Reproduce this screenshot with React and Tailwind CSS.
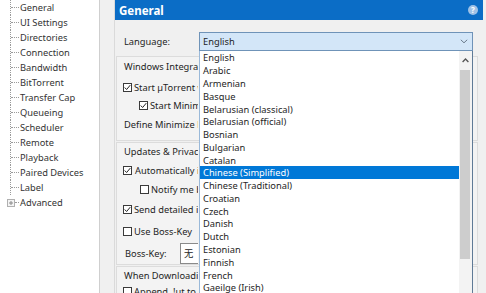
import React from "react";

const tree = [
  "General",
  "UI Settings",
  "Directories",
  "Connection",
  "Bandwidth",
  "BitTorrent",
  "Transfer Cap",
  "Queueing",
  "Scheduler",
  "Remote",
  "Playback",
  "Paired Devices",
  "Label",
];

const langs = [
  "English",
  "Arabic",
  "Armenian",
  "Basque",
  "Belarusian (classical)",
  "Belarusian (official)",
  "Bosnian",
  "Bulgarian",
  "Catalan",
  "Chinese (Simplified)",
  "Chinese (Traditional)",
  "Croatian",
  "Czech",
  "Danish",
  "Dutch",
  "Estonian",
  "Finnish",
  "French",
  "Gaeilge (Irish)",
];

function Check({ checked }) {
  return (
    <span className="w-[9px] h-[9px] border border-[#3a3a3a] bg-white flex items-center justify-center shrink-0">
      {checked && (
        <svg width="7" height="7" viewBox="0 0 7 7">
          <path d="M0.7 3.5 L2.6 5.5 L6.3 1.1" fill="none" stroke="#222" strokeWidth="1" />
        </svg>
      )}
    </span>
  );
}

export default function App() {
  return (
    <div className="w-[486px] h-[293px] overflow-hidden bg-[#f0f0f0] flex font-['Noto_Sans','Noto_Sans_CJK_SC',sans-serif] text-[9.3px] leading-[13px] text-[#1e1e1e]">
      {/* Left tree */}
      <div className="w-[100px] h-full bg-white border-r border-[#cfcfcf] flex flex-col shrink-0">
        {tree.map((t) => (
          <div key={t} className="h-[15px] flex items-stretch">
            <div className="w-[10px] shrink-0" />
            <div className="w-[9px] shrink-0 border-l border-dotted border-[#9a9a9a] flex items-center">
              <div className="w-full border-t border-dotted border-[#9a9a9a]" />
            </div>
            <div className="flex items-center pl-[1px] text-[#333]">{t}</div>
          </div>
        ))}
        <div className="h-[15px] flex items-center">
          <div className="w-[7px] shrink-0" />
          <div className="w-[8px] h-[8px] border border-[#b0b0b0] bg-[#f4f4f4] flex items-center justify-center shrink-0">
            <svg width="6" height="6" viewBox="0 0 6 6">
              <path d="M1 3 H5 M3 1 V5" stroke="#8a8a8a" strokeWidth="1" />
            </svg>
          </div>
          <div className="w-[4px] border-t border-dotted border-[#9a9a9a]" />
          <div className="pl-[1px] text-[#333]">Advanced</div>
        </div>
      </div>

      {/* Main panel */}
      <div className="ml-[14px] w-[369px] h-full flex flex-col shrink-0 border-l border-[#dadada]">
        <div className="h-[20px] bg-[#0b6dc6] flex items-center justify-between pl-[4px] pr-[5px] shrink-0">
          <span className="text-white font-bold text-[11.5px]">General</span>
          <span className="w-[10px] h-[10px] rounded-full bg-[#9fc2e6] flex items-center justify-center text-white font-bold text-[8px] leading-none">
            ?
          </span>
        </div>

        <div className="relative flex-1 flex flex-col bg-[#f0f0f0]">
          {/* Language row */}
          <div className="mt-[12px] h-[19px] flex items-center shrink-0">
            <div className="w-[84px] pl-[9px]">Language:</div>
            <div className="w-[274px] h-[19px] border border-[#6f93b8] bg-[#d3e6f8] flex items-center justify-between pl-[3px] pr-[4px]">
              <span>English</span>
              <svg width="8" height="5" viewBox="0 0 8 5">
                <path d="M0.8 0.8 L4 3.8 L7.2 0.8" fill="none" stroke="#6a7a8a" strokeWidth="1" />
              </svg>
            </div>
          </div>

          {/* Group 1 */}
          <div className="mt-[5px] ml-[1px] w-[362px] border border-[#dcdcdc] bg-[#f3f3f3] flex flex-col pb-[9px] shrink-0">
            <div className="mt-[2px] w-[81px] overflow-hidden whitespace-nowrap h-[14px] flex items-center pl-[7px]">Windows Integration</div>
            <div className="mt-[7.5px] w-[81px] overflow-hidden whitespace-nowrap h-[14px] flex items-center gap-[2px] pl-[6px]">
              <Check checked />
              <span>Start µTorrent when Windows starts</span>
            </div>
            <div className="mt-[3.5px] w-[81px] overflow-hidden whitespace-nowrap h-[14px] flex items-center gap-[2px] pl-[22px]">
              <Check checked />
              <span>Start Minimized</span>
            </div>
            <div className="mt-[5px] w-[81px] overflow-hidden whitespace-nowrap h-[14px] flex items-center pl-[7px]">Define Minimize behavior</div>
          </div>

          {/* Group 2 */}
          <div className="mt-[1px] ml-[1px] w-[362px] border border-[#dcdcdc] bg-[#f3f3f3] flex flex-col shrink-0">
            <div className="mt-[1px] w-[81px] overflow-hidden whitespace-nowrap h-[14px] flex items-center pl-[7px]">Updates &amp; Privacy</div>
            <div className="mt-[5px] w-[81px] overflow-hidden whitespace-nowrap h-[14px] flex items-center gap-[3px] pl-[6px]">
              <Check checked />
              <span>Automatically install updates</span>
            </div>
            <div className="mt-[5px] w-[81px] overflow-hidden whitespace-nowrap h-[14px] flex items-center gap-[2px] pl-[23px]">
              <Check />
              <span>Notify me before installing</span>
            </div>
            <div className="mt-[6px] w-[81px] overflow-hidden whitespace-nowrap h-[14px] flex items-center gap-[2px] pl-[6px]">
              <Check checked />
              <span>Send detailed info</span>
            </div>
            <div className="mt-[8px] w-[81px] overflow-hidden whitespace-nowrap h-[14px] flex items-center gap-[2px] pl-[6px]">
              <Check />
              <span>Use Boss-Key</span>
            </div>
            <div className="mt-[5px] w-[81px] overflow-hidden whitespace-nowrap h-[21px] flex items-center pl-[8px]">
              <span className="w-[55px] shrink-0">Boss-Key:</span>
              <div className="w-[70px] shrink-0 h-[21px] border border-[#8a8a8a] bg-white flex items-center pl-[3px]">无</div>
            </div>
          </div>

          {/* Group 3 */}
          <div className="mt-[1px] ml-[1px] w-[362px] border border-[#dcdcdc] bg-[#f3f3f3] flex flex-col flex-1">
            <div className="mt-[1px] w-[81px] overflow-hidden whitespace-nowrap h-[14px] flex items-center pl-[7px]">When Downloading</div>
            <div className="mt-[2px] w-[81px] overflow-hidden whitespace-nowrap h-[14px] flex items-center gap-[2px] pl-[6px]">
              <Check />
              <span>Append .!ut to incomplete files</span>
            </div>
          </div>

          {/* Dropdown list overlay */}
          <div className="absolute left-[84px] top-[31px] w-[274px] h-[262px] bg-white border-l border-r border-l-[#9ab9d9] border-r-[#5f7a96] flex">
            <div className="flex-1 flex flex-col pt-[0.6px]">
              {langs.map((l) => (
                <div
                  key={l}
                  className={
                    l === "Chinese (Simplified)"
                      ? "h-[12.78px] shrink-0 flex items-center pl-[3px] bg-[#0078d7] text-white"
                      : "h-[12.78px] shrink-0 flex items-center pl-[3px]"
                  }
                >
                  {l}
                </div>
              ))}
            </div>
            <div className="w-[13px] bg-[#f3f3f3] flex flex-col items-start">
              <div className="h-[19px] w-[12px] flex items-center justify-center">
                <svg width="7" height="5" viewBox="0 0 7 5">
                  <path d="M0.6 4 L3.5 1 L6.4 4" fill="none" stroke="#555" strokeWidth="1.3" />
                </svg>
              </div>
              <div className="ml-[1px] w-[10px] h-[189px] bg-[#cdcdcd]" />
            </div>
          </div>
        </div>
      </div>
    </div>
  );
}
